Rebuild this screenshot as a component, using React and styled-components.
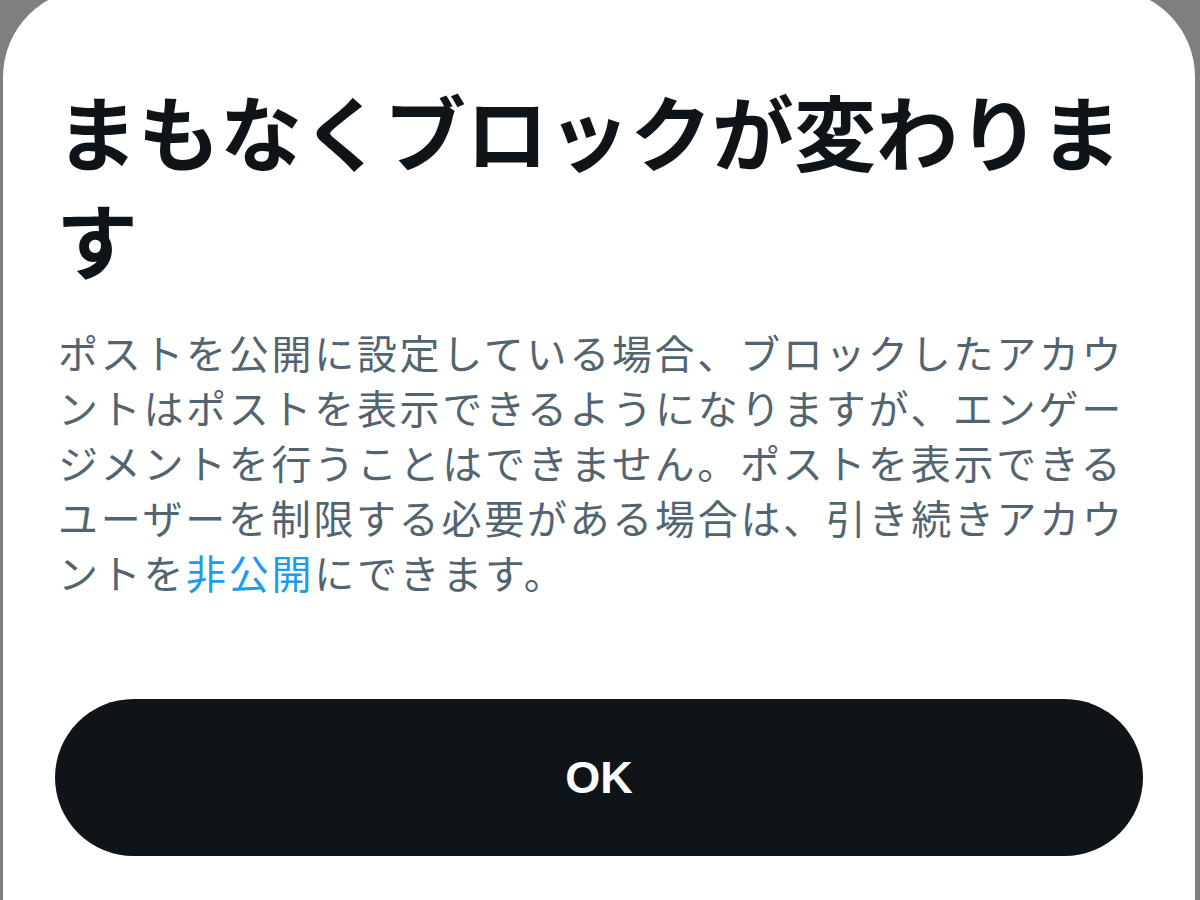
import React from "react";
import styled, { createGlobalStyle } from "styled-components";

const GlobalStyle = createGlobalStyle`
  html, body {
    margin: 0;
    padding: 0;
    background: #7f7f7f;
  }
  body {
    font-family: "Noto Sans CJK JP", "Noto Sans", sans-serif;
  }
`;

const Page = styled.div`
  min-height: 100vh;
  display: flex;
  flex-direction: column;
  padding: 0 5px 0 3px;
  box-sizing: border-box;
  overflow: hidden;
`;

const Sheet = styled.div`
  flex: 1;
  margin-top: -11px;
  background: #ffffff;
  border-radius: 88px 88px 0 0;
  padding: 87px 52px 40px;
  display: flex;
  flex-direction: column;
`;

const Title = styled.h1`
  margin: 0;
  padding-left: 1px;
  font-size: 82px;
  line-height: 108px;
  font-weight: 700;
  color: #0f1419;
`;

const Message = styled.p`
  margin: 33px 0 0;
  padding-left: 3px;
  font-size: 40px;
  line-height: 55px;
  letter-spacing: 2.7px;
  font-weight: 400;
  color: #536471;
`;

const Link = styled.a`
  color: #1d9bf0;
  text-decoration: none;
`;

const OkButton = styled.button`
  margin-top: 99px;
  height: 157px;
  width: 100%;
  border: none;
  border-radius: 79px;
  background: #0f1419;
  color: #ffffff;
  font-family: "Liberation Sans", Arial, sans-serif;
  font-size: 45px;
  font-weight: 700;
  cursor: pointer;
`;

export default function App() {
  return (
    <>
      <GlobalStyle />
      <Page>
        <Sheet>
          <Title>まもなくブロックが変わります</Title>
          <Message>
            ポストを公開に設定している場合、ブロックしたアカウントはポストを表示できるようになりますが、エンゲージメントを行うことはできません。ポストを表示できるユーザーを制限する必要がある場合は、引き続きアカウントを
            <Link href="#">非公開</Link>
            にできます。
          </Message>
          <OkButton>OK</OkButton>
        </Sheet>
      </Page>
    </>
  );
}
